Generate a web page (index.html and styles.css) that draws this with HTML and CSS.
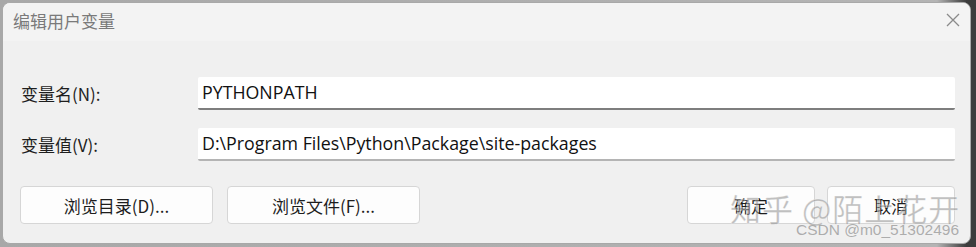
FILE: index.html
```html
<!DOCTYPE html>
<html lang="zh-CN">
<head>
<meta charset="utf-8">
<title>编辑用户变量</title>
<link rel="stylesheet" href="styles.css">
</head>
<body>
<div class="screen">
  <div class="window">
    <div class="titlebar">
      <span class="title">编辑用户变量</span>
      <svg class="close" width="16" height="16" viewBox="0 0 16 16"><path d="M2 2 L14 14 M14 2 L2 14" stroke="#8a8a8a" stroke-width="1.3" fill="none"/></svg>
    </div>
    <div class="content">
      <div class="row">
        <label class="label">变量名(N):</label>
        <div class="field">PYTHONPATH</div>
      </div>
      <div class="row">
        <label class="label">变量值(V):</label>
        <div class="field">D:\Program Files\Python\Package\site-packages</div>
      </div>
      <div class="buttons">
        <div class="group">
          <button class="btn wide">浏览目录(D)...</button>
          <button class="btn wide">浏览文件(F)...</button>
        </div>
        <div class="group right">
          <button class="btn narrow">确定</button>
          <button class="btn narrow">取消</button>
        </div>
      </div>
    </div>
    <div class="watermark">知乎 @陌上花开</div>
    <div class="csdn">CSDN @m0_51302496</div>
  </div>
</div>
</body>
</html>
```
FILE: styles.css
```css
html, body {
  margin: 0;
  padding: 0;
  width: 976px;
  height: 247px;
  overflow: hidden;
  background: #9a9a9a;
}
.screen {
  width: 976px;
  height: 247px;
  background: linear-gradient(90deg, #a8a8a8 0%, #b4b4b4 96%, #3c3c3c 99%);
  padding: 2px 5px 3px 2px;
  box-sizing: border-box;
}
.window {
  position: relative;
  height: 242px;
  background: #f0f0f0;
  border: 1px solid #a8a8a8;
  border-radius: 8px;
  overflow: hidden;
  font-family: "Noto Sans", "Noto Sans CJK SC", sans-serif;
  box-sizing: border-box;
}
.titlebar {
  height: 38px;
  background: #f3f3f3;
  display: flex;
  align-items: center;
  justify-content: space-between;
  padding: 0 9px 0 10px;
}
.title {
  font-family: "Noto Sans CJK SC", sans-serif;
  font-size: 17px;
  color: #7a7a7a;
  margin-top: -4px;
}
.close {
  margin-top: -4px;
}
.content {
  padding: 36px 15px 0 17px;
}
.row {
  display: flex;
  align-items: center;
  height: 33px;
  margin-bottom: 18px;
}
.label {
  width: 177px;
  font-family: "Noto Sans CJK SC", sans-serif;
  font-size: 17px;
  color: #1e1e1e;
  padding-left: 1px;
}
.field {
  flex: 1;
  height: 33px;
  box-sizing: border-box;
  background: #ffffff;
  border-bottom: 2px solid #7e7e7e;
  padding: 0 0 0 4px;
  font-family: "Open Sans", "Noto Sans CJK SC", sans-serif;
  font-size: 17.8px;
  line-height: 30px;
  color: #111;
  border-radius: 2px;
}
.row + .row .field {
  border-bottom-color: #b4b4b4;
}
.buttons {
  display: flex;
  justify-content: space-between;
  padding-top: 7px;
}
.group {
  display: flex;
  gap: 14px;
}
.group.right {
  gap: 12px;
}
.btn {
  height: 38px;
  background: #fdfdfd;
  border: 1px solid #d6d6d6;
  border-radius: 4px;
  font-family: "Noto Sans CJK SC", sans-serif;
  font-size: 17px;
  color: #1e1e1e;
  padding: 0;
}
.btn.wide { width: 193px; }
.btn.narrow { width: 128px; }
.watermark {
  position: absolute;
  left: 727px;
  top: 185px;
  font-family: "Noto Sans CJK SC", sans-serif;
  font-size: 31px;
  line-height: 40px;
  color: rgba(140, 140, 140, 0.55);
  letter-spacing: 1px;
  pointer-events: none;
  -webkit-text-stroke: 0.5px rgba(255,255,255,0.6);
}
.csdn {
  position: absolute;
  left: 793px;
  top: 218px;
  font-family: "Liberation Sans", sans-serif;
  font-size: 15.5px;
  color: rgba(150, 150, 150, 0.75);
  pointer-events: none;
}
```
